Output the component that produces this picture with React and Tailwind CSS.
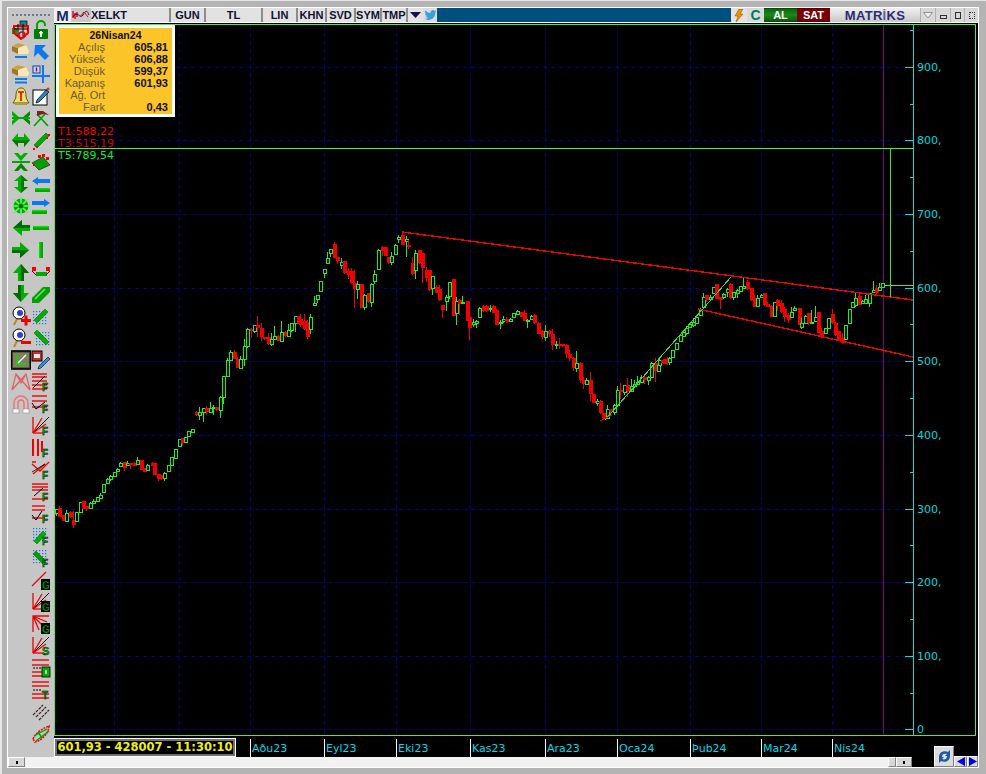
import React from "react";

const G = "#00a800", R = "#f00000", B = "#0a78f0", K = "#000";

const Arrow = ({ r = 0, c = "#00b000", d = "#006c00" }) => (
  <g transform={`rotate(${r} 10 10)`}>
    <path d="M10 2 L2 11 H7 V19 H13 V11 H18 Z" fill={c} />
    <path d="M10 2 L18 11 H13 V19 H10 Z" fill={d} />
  </g>
);
const BlueDots = ({ x = 2, y = 2 }) => (
  <g fill={B}>
    {[0, 3, 6, 9, 12].flatMap((a) =>
      [0, 3, 6, 9, 12].map((b) => <rect key={a + "-" + b} x={x + a} y={y + b} width="1.2" height="1.2" />)
    )}
  </g>
);
const Letter = ({ ch, x = 11, y = 19, s = 10, box }) => (
  <g>
    {box && <rect x={x - 1} y={y - 10} width="9" height="11" fill={K} />}
    <text x={x} y={y} fontSize={s} fontWeight="700" fill={box ? "#00c000" : "#00a800"} stroke={K} strokeWidth=".4" fontFamily="'Liberation Sans', sans-serif">
      {ch}
    </text>
  </g>
);
const RLines = ({ ys, x2 = 19 }) => (
  <g stroke={R} strokeWidth="1.4">
    {ys.map((y) => <line key={y} x1="1" x2={x2} y1={y} y2={y} />)}
  </g>
);
const Fan = () => (
  <g stroke={R} strokeWidth="1.3">
    <line x1="2" y1="1" x2="2" y2="17" />
    <line x1="2" y1="17" x2="12" y2="17" />
    <line x1="2" y1="17" x2="18" y2="1" stroke={K} strokeWidth="1" />
    <line x1="2" y1="17" x2="11" y2="2" />
    <line x1="2" y1="17" x2="15" y2="8" />
  </g>
);
const Loupe = ({ plus }) => (
  <g>
    <line x1="7" y1="11" x2="3" y2="19" stroke="#b88a20" strokeWidth="2" />
    <circle cx="8" cy="7" r="6" fill="#fff" stroke={K} strokeWidth="1" />
    <circle cx="9" cy="7" r="3" fill="#3040c0" />
    <rect x="10" y="13" width="10" height="3" fill={R} />
    {plus && <rect x="13.5" y="9.5" width="3" height="10" fill={R} />}
  </g>
);
const Block = ({ two }) => (
  <g>
    <path d="M1 4 L7 1 L15 3 L18 9 L17 12 L7 12 L2 9 Z" fill="#f8e8b8" />
    <path d="M1 4 L7 6 V12 L1 9 Z" fill="#a07820" />
    <path d="M1 4 L7 1 L15 3 L7 6 Z" fill="#c8a050" />
    <rect x="4" y="14" width="12" height="2" fill={B} />
    {two && <rect x="4" y="17.5" width="12" height="2" fill={B} />}
  </g>
);

const leftIcons = [
  <g key="a">
    <rect x="9" y="1" width="7" height="6" fill="#0a8aa0" stroke={K} strokeWidth=".7" />
    <rect x="1" y="8" width="5" height="6" fill="#00a000" />
    <path d="M3 6 H17 V13 L10 19 L3 13 Z" fill="none" stroke={R} strokeWidth="2" />
    <path d="M7 4 V16 M12 4 V16 M3 9 H17" stroke={K} strokeWidth="1" />
    <circle cx="11" cy="15" r="3" fill="none" stroke={R} strokeWidth="1.5" />
  </g>,
  <Block key="b" />,
  <Block key="c" two />,
  <g key="d">
    <path d="M10 2 C14 2 15 6 15 10 C15 13 17 15 18 17 H2 C3 15 5 13 5 10 C5 6 6 2 10 2 Z" fill="#e8e070" stroke="#605818" strokeWidth="1" />
    <path d="M7 6 H13 M10 6 V15" stroke={R} strokeWidth="1.6" />
    <rect x="4" y="17" width="12" height="2" fill="#a8a040" />
  </g>,
  <g key="e">
    <path d="M1 3 L9 10 L1 17 V13 L4 10 L1 7 Z" fill="#00b000" />
    <path d="M19 3 L11 10 L19 17 V13 L16 10 L19 7 Z" fill="#008800" />
    <rect x="1" y="9" width="18" height="2" fill={G} />
  </g>,
  <g key="f">
    <path d="M1 10 L7 3 V7 H13 V3 L19 10 L13 17 V13 H7 V17 Z" fill="#00b000" />
    <path d="M1 10 L7 17 V13 H13 V17 L19 10 Z" fill="#007c00" />
  </g>,
  <g key="g">
    <path d="M3 1 L10 9 L17 1 H13 L10 4 L7 1 Z" fill="#00b000" />
    <path d="M3 19 L10 11 L17 19 H13 L10 16 L7 19 Z" fill="#008800" />
    <rect x="1" y="9" width="18" height="2" fill={G} />
  </g>,
  <g key="h">
    <path d="M10 1 L17 7 H13 V13 H17 L10 19 L3 13 H7 V7 H3 Z" fill="#00b000" />
    <path d="M10 1 L17 7 H13 V13 H17 L10 19 Z" fill="#007c00" />
  </g>,
  <g key="i">
    <circle cx="10" cy="10" r="7.5" fill="#00b000" />
    <path d="M3 3 L17 17 M17 3 L3 17 M10 1 V19 M1 10 H19" stroke="#70f070" strokeWidth="1.6" />
    <circle cx="10" cy="10" r="2.5" fill="#007c00" />
  </g>,
  <Arrow key="j" r={-90} />,
  <Arrow key="k" r={90} />,
  <Arrow key="l" r={0} />,
  <Arrow key="m" r={180} />,
  <Loupe key="n" plus />,
  <Loupe key="o" />,
  <g key="p">
    <rect x="0.5" y="1" width="19" height="18" fill="#606030" stroke={K} strokeWidth="1.6" />
    <rect x="2" y="3" width="16" height="14" fill="#808060" />
    <path d="M6 5 V14 H15" stroke="#00e000" strokeWidth="1.6" fill="none" />
    <path d="M7 13 L15 5" stroke="#fff" strokeWidth="1.2" />
  </g>,
  <path key="q" d="M1 18 L5 2 L10 11 L15 2 L19 18 M5 2 L19 18 M15 2 L1 18" fill="none" stroke="#e06060" strokeWidth="1.2" />,
  <g key="r">
    <path d="M3 17 V9 A7 7 0 0 1 17 9 V17 M7 17 V9 A3 3 0 0 1 13 9 V17" fill="none" stroke="#f07070" strokeWidth="1.4" />
    <rect x="2" y="15" width="6" height="4" fill="#fff" stroke="#909090" strokeWidth=".6" />
    <rect x="12" y="15" width="6" height="4" fill="#fff" stroke="#909090" strokeWidth=".6" />
  </g>,
];

const rightIcons = [
  <g key="a">
    <path d="M6 9 V5 A4 4 0 0 1 14 5 V6" fill="none" stroke="#00a000" strokeWidth="2" />
    <rect x="3" y="9" width="14" height="10" rx="1" fill="#007c00" />
    <rect x="9" y="11" width="2" height="6" fill="#fff" />
    <rect x="8" y="12" width="4" height="1.5" fill="#fff" />
  </g>,
  <path key="b" d="M4 3 H15 L11 7 L18 14 L14 18 L7 11 L3 15 Z" fill={B} />,
  <g key="c">
    <rect x="2" y="2" width="7" height="7" fill="#c8d8f8" stroke="#0040b0" strokeWidth="1" />
    <path d="M5.5 3.5 V7.5" stroke="#c00000" strokeWidth="1.4" />
    <rect x="11" y="1" width="2" height="18" fill={B} />
    <rect x="1" y="11" width="18" height="2" fill={B} />
  </g>,
  <g key="d">
    <rect x="2" y="4" width="14" height="15" fill="#fff" stroke={K} strokeWidth="1" />
    <path d="M6 14 L15 4 L18 6 L8 16 L5 17 Z" fill="#3080c0" stroke={K} strokeWidth=".7" />
    <circle cx="17" cy="3" r="1.5" fill="#c04010" />
  </g>,
  <g key="e">
    <path d="M3 18 L14 6 M6 6 L17 18" stroke="#00a800" strokeWidth="1.8" />
    <path d="M6 3 H12 L18 7 L12 6 L6 8 Z" fill="#802020" />
  </g>,
  <g key="f">
    <path d="M3 15 L15 3 L18 6 L6 18 Z" fill={G} stroke="#007000" strokeWidth=".6" />
    <g fill={R}><path d="M2 18h2v2h-2zM5 16h2v2h-2zM15 7h2v2h-2zM17 4h2v2h-2z" /></g>
    <path d="M5 12 L12 5" stroke="#70f070" strokeWidth="1" />
  </g>,
  <g key="g">
    <path d="M1 11 L8 18 L19 13 L12 5 Z" fill="#00a000" stroke={K} strokeWidth=".5" />
    <g fill={R}><path d="M7 3h3v3h-3zM11 2h3v3h-3zM15 5h3v3h-3zM2 12h2v2h-2z" /></g>
  </g>,
  <g key="h">
    <path d="M1 7 L7 3 V5 H19 V9 H7 V11 Z" fill={B} />
    <rect x="4" y="14" width="15" height="4" fill="#00a800" />
    <rect x="4" y="14" width="15" height="1.5" fill="#00e000" />
  </g>,
  <g key="i">
    <path d="M19 7 L13 3 V5 H1 V9 H13 V11 Z" fill={B} />
    <rect x="1" y="14" width="15" height="4" fill="#00a800" />
    <rect x="1" y="14" width="15" height="1.5" fill="#00e000" />
  </g>,
  <g key="j"><rect x="2" y="8" width="16" height="4" fill="#00a800" /><rect x="2" y="8" width="16" height="1.5" fill="#00e000" /></g>,
  <g key="k"><rect x="8" y="2" width="4" height="16" fill="#00a800" /><rect x="8" y="2" width="1.5" height="16" fill="#00e000" /></g>,
  <g key="l">
    <rect x="5" y="10" width="11" height="4" fill="#00a800" />
    <path d="M1 5 h4 v4 h-4z M15 5 h4 v4 h-4z" fill={R} />
    <path d="M1 9 L5 13 M19 9 L15 13" stroke="#800000" strokeWidth="1" />
  </g>,
  <g key="m">
    <path d="M1 14 L12 3 H19 V8 L8 19 H1 Z" fill="#00a000" />
    <path d="M4 15 L14 5" stroke="#60f060" strokeWidth="1.4" />
  </g>,
  <g key="n"><BlueDots x={2} y={5} /><path d="M3 14 L14 3 L17 6 L6 17 Z" fill="#00b000" stroke="#006000" strokeWidth=".5" /></g>,
  <g key="o"><BlueDots x={5} y={4} /><path d="M3 5 L6 2 L18 14 L15 17 Z" fill="#00b000" stroke="#006000" strokeWidth=".5" /></g>,
  <g key="p">
    <rect x="1" y="1" width="10" height="10" fill="#c03030" stroke={K} strokeWidth="1" />
    <rect x="3" y="4" width="6" height="4" fill="#e8e8e8" />
    <path d="M8 16 L17 7 L19 9 L10 18 L7 19 Z" fill="#3090e0" stroke={K} strokeWidth=".6" />
  </g>,
];

const rightF = [
  <g key="a"><RLines ys={[2, 5, 9, 13, 17]} x2={16} /><path d="M2 16 L14 4" stroke={K} strokeWidth="1" /><Letter ch="F" /></g>,
  <g key="b"><RLines ys={[2, 7, 13]} x2={16} /><path d="M1 9 L5 15 L14 8" stroke={K} strokeWidth="1" fill="none" /><Letter ch="F" /></g>,
  <g key="c"><Fan /><Letter ch="F" /></g>,
  <g key="d"><path d="M2 1 V18 M7 1 V18 M11 3 V14" stroke={R} strokeWidth="2" /><Letter ch="F" /></g>,
  <g key="e"><path d="M1 4 L9 11 L18 2 M2 14 L14 4 M1 2 H5" stroke={R} strokeWidth="1.3" fill="none" /><path d="M1 12 L14 4" stroke={K} strokeWidth=".8" /><Letter ch="F" /></g>,
  <g key="f"><RLines ys={[2, 5, 8, 17]} x2={17} /><path d="M3 14 L12 6" stroke={K} strokeWidth="1" /><Letter ch="F" /></g>,
  <g key="g"><RLines ys={[2, 6, 14]} x2={14} /><path d="M1 11 L5 16 L11 7" stroke={K} strokeWidth="1" fill="none" /><Letter ch="F" /></g>,
  <g key="h"><BlueDots x={2} y={2} /><path d="M3 15 L12 5 L15 8 L6 18 Z" fill="#00b000" stroke="#006000" strokeWidth=".5" /><Letter ch="F" /></g>,
  <g key="i"><BlueDots x={2} y={2} /><path d="M2 6 L5 3 L15 13 L12 16 Z" fill="#00a000" stroke="#006000" strokeWidth=".5" /><Letter ch="F" /></g>,
  <g key="j"><path d="M1 16 L15 2" stroke={R} strokeWidth="1.2" /><Letter ch="G" box /></g>,
  <g key="k"><Fan /><Letter ch="G" box /></g>,
  <g key="l"><path d="M2 18 V2 H18 M2 2 L14 14 M2 2 L8 16 M2 2 L16 8" stroke={R} strokeWidth="1.3" fill="none" /><Letter ch="G" box /></g>,
  <g key="m"><Fan /><Letter ch="S" s={11} /></g>,
  <g key="n"><RLines ys={[2, 7, 14, 18]} x2={18} /><path d="M2 10 H10" stroke={K} strokeDasharray="2 1" /><rect x="11" y="9" width="8" height="10" fill="#00b000" stroke={K} strokeWidth=".8" /><rect x="14" y="12" width="2" height="4" fill="#c0c0c0" /></g>,
  <g key="o"><RLines ys={[2, 6, 14, 18]} x2={18} /><path d="M2 10 H10" stroke={K} strokeDasharray="2 1" /><Letter ch="T" /></g>,
  <g key="p"><path d="M2 13 L12 3 M5 15 L15 5 M8 18 L18 8" stroke="#402020" strokeWidth="1.2" strokeDasharray="3 1" /></g>,
  <g key="q">
    <path d="M2 15 C5 8 13 4 18 2 C18 8 12 16 4 18 Z" fill="none" stroke={R} strokeWidth="1.6" strokeDasharray="2 1" />
    <path d="M3 12 L16 5 M5 17 L18 7 M7 8 L11 14" stroke="#00a000" strokeWidth="1.4" />
  </g>,
];

const Ico = ({ children }) => (
  <svg width="20" height="20" viewBox="0 0 20 20" className="block">{children}</svg>
);

function Toolbar() {
  const cells = [];
  for (let i = 0; i < 18; i++) {
    cells.push(<div key={"l" + i} className="flex h-[22px] w-[20px] items-center justify-center"><Ico>{leftIcons[i]}</Ico></div>);
    cells.push(<div key={"r" + i} className="flex h-[22px] w-[20px] items-center justify-center"><Ico>{rightIcons[i] || rightF[i - rightIcons.length]}</Ico></div>);
  }
  const rest = rightF.slice(2);
  return (
    <div className="flex w-[46px] shrink-0 flex-col bg-[#c6c6c6]">
      <div className="mx-[4px] mt-[6px] h-[2px] border-t-2 border-dotted border-[#6a7a90]" />
      <div className="mt-[3px] grid grid-cols-[20px_20px] justify-center">
        {cells}
        {rest.map((ic, i) => (
          <React.Fragment key={i}>
            <div className="h-[22px]" />
            <div className="flex h-[22px] w-[20px] items-center justify-center"><Ico>{ic}</Ico></div>
          </React.Fragment>
        ))}
      </div>
    </div>
  );
}

const TB = ({ w, children }) => (
  <div className="flex h-[14px] shrink-0 items-center justify-center border-r-2 border-[#8c8c8c] bg-[#e2e2e2] text-[11px] font-bold text-[#101030]" style={{ width: w }}>
    {children}
  </div>
);
const WinBtn = ({ w, children }) => (
  <div className="flex h-[14px] shrink-0 items-center justify-center border-l border-[#b0b0b0] bg-[#d8d8d8]" style={{ width: w }}>{children}</div>
);

function TopBar() {
  return (
    <div className="flex h-[14px] bg-[#00507f] font-['Liberation_Sans',sans-serif] leading-none">
      <div className="flex h-[14px] w-[17px] shrink-0 items-center justify-center bg-[#f0f0f0] text-[15px] font-bold text-[#1a2a6a]">M</div>
      <div className="flex h-[14px] w-[20px] shrink-0 items-center justify-center bg-[#c8c8c8]">
        <svg width="18" height="12" viewBox="0 0 18 12"><path d="M1 2 V9 M3 4 V10 M5 3 V8" stroke={R} strokeWidth="1.4" /><path d="M1 8 C5 0 8 11 11 6 S15 1 17 6" stroke="#101060" fill="none" /><path d="M8 8 L12 3 L16 8" stroke={R} fill="none" /></svg>
      </div>
      <div className="flex h-[14px] w-[80px] shrink-0 items-center border-r-2 border-[#8c8c8c] bg-[#e2e2e2] text-[11px] font-bold text-[#101030]">XELKT</div>
      <TB w={35}>GUN</TB>
      <TB w={57}>TL</TB>
      <TB w={35}>LIN</TB>
      <TB w={29}>KHN</TB>
      <TB w={29}>SVD</TB>
      <TB w={26}>SYM</TB>
      <TB w={26}>TMP</TB>
      <div className="flex h-[14px] w-[15px] shrink-0 items-center justify-center bg-[#e2e2e2]">
        <svg width="11" height="7" viewBox="0 0 11 7"><path d="M0 0 H11 L5.5 6 Z" fill="#101050" /></svg>
      </div>
      <div className="flex h-[14px] w-[14px] shrink-0 items-center justify-center bg-[#dcdcdc]">
        <svg width="13" height="12" viewBox="0 0 24 24"><path fill="#3aa0dc" d="M23.95 4.57a10 10 0 0 1-2.83.78 4.96 4.96 0 0 0 2.17-2.72 10 10 0 0 1-3.13 1.19 4.92 4.92 0 0 0-8.38 4.48A13.98 13.98 0 0 1 1.67 3.15a4.92 4.92 0 0 0 1.52 6.57 4.9 4.9 0 0 1-2.23-.61v.06a4.92 4.92 0 0 0 3.95 4.83 5 5 0 0 1-2.21.08 4.94 4.94 0 0 0 4.6 3.42A9.87 9.87 0 0 1 0 19.54a13.94 13.94 0 0 0 7.55 2.21c9.05 0 14-7.5 14-13.98l-.01-.64a10 10 0 0 0 2.41-2.56z" /></svg>
      </div>
      <div className="min-w-0 flex-1" />
      <div className="flex h-[14px] w-[16px] shrink-0 items-center justify-center bg-[#e2e2e2]">
        <svg width="10" height="13" viewBox="0 0 10 13"><path d="M5 0 H9 L6 5 H9 L2 13 L4 7 H1 Z" fill="#f09000" stroke="#805000" strokeWidth=".5" /></svg>
      </div>
      <div className="flex h-[14px] w-[17px] shrink-0 items-center justify-center bg-[#d8dcd8] text-[14px] font-black text-[#007860]">C</div>
      <div className="flex h-[14px] w-[33px] shrink-0 items-center justify-center border-y border-[#0a4a0a] bg-gradient-to-b from-[#0a6a0a] via-[#1a8a1a] to-[#0a5a0a] text-[11px] font-bold text-white">AL</div>
      <div className="flex h-[14px] w-[33px] shrink-0 items-center justify-center border-y border-[#5a0000] bg-[#7a0008] text-[11px] font-bold text-white">SAT</div>
      <div className="flex h-[14px] w-[90px] shrink-0 items-center justify-center bg-gradient-to-b from-[#f0f0f0] to-[#c8c8c8] text-[13px] font-bold tracking-[0.3px] text-[#2a2a78]">MATR<span className="text-[#606080]">İ</span>KS</div>
      <WinBtn w={15}><svg width="10" height="7" viewBox="0 0 10 7"><path d="M0.5 0.5 H9.5 L5 6 Z" fill="#f0f0f0" stroke="#909090" /></svg></WinBtn>
      <WinBtn w={15}><div className="mt-[3px] h-[4px] w-[7px] border border-[#303030]" /></WinBtn>
      <WinBtn w={14}><div className="h-[7px] w-[6px] border border-[#303030]" /></WinBtn>
      <WinBtn w={14}><div className="h-[7px] w-[6px] border border-dotted border-[#303030]" /></WinBtn>
    </div>
  );
}

/* ----- chart ----- */
const path = [
  [190, 420], [195, 412], [205, 414], [220, 402], [230, 352], [240, 365], [250, 328], [262, 333], [275, 342],
  [290, 325], [300, 322], [540, 330], [550, 340], [565, 350], [580, 375], [590, 390], [605, 417], [618, 392], [640, 378], [660, 362],
];
const at = (x) => {
  for (let i = 1; i < path.length; i++) {
    if (x <= path[i][0]) {
      const [a, b] = path[i - 1], [c, d] = path[i];
      return b + ((d - b) * (x - a)) / (c - a);
    }
  }
  return 362;
};
function generated(from, to) {
  let s = 987 + from;
  const rnd = () => ((s = (s * 1664525 + 1013904223) >>> 0) / 4294967296);
  const out = [];
  let prev = at(from);
  for (let x = from; x < to; x += 3.41) {
    const close = at(x + 1.7) + (rnd() - 0.5) * 14;
    const open = prev;
    const top = Math.min(open, close), bot = Math.max(open, close);
    out.push({ x: Math.round(x), top: Math.round(top), bot: Math.round(bot), hi: Math.round(top - rnd() * rnd() * 12), lo: Math.round(bot + rnd() * rnd() * 12), up: close < open });
    prev = close;
  }
  return out;
}
const expand = (ox, oy, list) =>
  list.map(([X, c, t, b, h, l]) => ({
    x: Math.round(ox + X / 3 - 2),
    up: c === "g",
    top: Math.round(oy + t / 3),
    bot: Math.round(oy + b / 3),
    hi: Math.round(oy + (h ?? t) / 3),
    lo: Math.round(oy + (l ?? b) / 3),
  }));

const z10 = [[14,"r",240,256],[22,"g",238,248,238,258],[31,"r",234,260,228,262],[43,"r",256,272,255,274],[52,"g",250,272,240,274],[63,"r",246,262,244,264],[73,"r",270,284,244,294],[82,"g",247,272],[93,"g",217,247],[103,"r",214,238],[112,"r",228,238,228,242],[124,"g",219,233,217,234],[133,"g",212,219,206,222],[143,"g",201,212],[154,"g",195,204,190,206],[163,"g",163,185],[175,"g",147,158,144,162],[184,"g",138,147,136,152],[195,"g",126,137],[205,"g",116,124,114,126],[214,"g",99,108,96,110],[226,"r",96,114,96,122],[235,"g",100,104,93,106],[244,"r",98,105,98,116],[255,"r",98,107,96,108],[265,"g",90,101,82,104],[276,"r",90,120],[286,"r",114,125],[295,"g",105,119,102,120],[309,"r",99,108,97,108],[316,"r",99,135],[326,"r",132,147,132,152],[336,"r",135,147,135,150],[346,"g",128,144,126,152],[358,"g",106,122],[367,"g",82,104],[378,"g",58,84],[389,"g",28,47],[398,"r",24,38,24,48],[408,"g",22,36,22,40],[418,"g",4,17],[429,"g",-2,6]];
const z9 = [[3,"r",298,316,282,320],[14,"r",302,326,283,330],[24,"r",306,352,300,358],[34,"g",290,326,283,342],[44,"g",250,254,228,255],[55,"g",226,236,224,248],[64,"g",184,212],[74,"g",148,160,148,174],[85,"g",115,128,95,128],[94,"g",88,98,88,112],[106,"r",72,113,66,115],[115,"r",112,122,112,132],[125,"g",125,136,115,148],[136,"r",124,158,124,162],[146,"r",152,165,145,178],[156,"r",154,190,145,192],[166,"r",188,208,150,264],[175,"g",193,206,184,238],[187,"r",193,263,193,264],[196,"g",225,260,222,270],[207,"r",220,246,220,248],[217,"g",193,246,188,262],[226,"g",162,184,150,192],[238,"g",91,146,88,148],[248,"r",82,92,78,108],[258,"r",82,108],[268,"r",110,130,110,132],[277,"g",108,126,96,134],[288,"g",75,101,72,102],[298,"g",50,56,44,70],[308,"r",45,75,32,76],[320,"g",56,62,48,110],[328,"r",75,81,60,88],[339,"r",128,162,110,164],[349,"g",100,150,90,178],[359,"r",90,130,90,132],[370,"r",100,144,100,188],[380,"r",150,175,140,185],[390,"r",150,210,150,212],[400,"g",168,204,168,226],[410,"r",200,220,195,220],[420,"r",208,240,195,242],[430,"r",255,270,255,294],[440,"g",231,243,226,274],[451,"g",186,228,186,238],[461,"r",177,288],[471,"g",243,278,230,314],[481,"r",240,252,236,285],[490,"g",246,250,228,252],[503,"r",243,303,243,304],[511,"r",290,324,290,360],[521,"g",307,313,298,322],[532,"g",303,308,300,324],[541,"g",264,290,262,292],[553,"r",258,272,255,276],[562,"r",258,272,255,276],[572,"g",264,268,255,276],[583,"r",258,278,256,280],[592,"r",270,315,268,316],[603,"g",305,308,300,326],[613,"g",297,302,288,308],[622,"r",297,305,290,310],[634,"g",298,302,294,304],[643,"g",280,290,278,292],[654,"g",274,282,270,284],[665,"r",277,292,275,292],[674,"r",280,302,270,304],[685,"g",299,302,296,323],[695,"g",288,296,285,300],[705,"r",285,310,283,312],[716,"r",308,342,305,342]];
const z8 = [[0,"g",420,434,416,438],[8,"r",420,430],[15,"r",418,432],[23,"r",418,430,412,434],[31,"g",414,426,410,436],[40,"g",390,410],[52,"g",370,386],[62,"g",345,362],[71,"g",335,347,335,350],[81,"g",325,340,318,345],[91,"g",312,322],[102,"g",305,315,295,320],[112,"g",290,310],[122,"g",270,285,265,285],[133,"g",232,260,218,262],[142,"r",225,240,225,245],[152,"g",232,238,226,240],[163,"g",202,218],[172,"r",192,236],[184,"r",232,240,232,266],[193,"g",222,232,218,236],[203,"g",207,217,205,232],[214,"r",192,234,188,236],[223,"g",217,232,216,240],[235,"g",210,218,208,234],[244,"g",198,212],[253,"g",198,203,172,205],[265,"r",186,208,180,210],[275,"r",205,240,203,242],[285,"r",234,260,225,262],[295,"g",235,258,225,262],[305,"g",225,231,222,233],[316,"r",220,255,218,257],[325,"r",252,260,245,262],[336,"r",258,290,256,292],[346,"g",247,288],[355,"r",240,258,238,274],[366,"r",248,276,240,278],[376,"r",268,290,262,305],[387,"r",285,300,280,310],[397,"g",276,292,260,295],[406,"g",265,270,258,272],[419,"r",265,316],[427,"g",310,320,295,326],[437,"g",288,308,285,310],[447,"r",280,310,278,315],[457,"g",305,310,270,312],[468,"g",292,302,258,305],[478,"r",276,340],[487,"r",332,347,325,355],[498,"g",325,340],[508,"g",294,325],[518,"r",282,310,268,312],[528,"r",308,346,305,348],[538,"r",334,362],[550,"r",354,368,340,372],[559,"g",316,358],[570,"g",268,308],[580,"g",246,260],[589,"g",235,256,218,262],[599,"r",228,254,222,256],[610,"g",243,250,240,252],[619,"g",238,248,225,250],[631,"g",220,250,218,262],[641,"g",210,215,183,216],[651,"r",205,220,195,222],[661,"g",202,211,188,212],[670,"g",190,202,188,203]];

const candles = [
  ...expand(50, 430, z10),
  ...generated(195, 300),
  ...expand(300, 220, z9),
  ...generated(541, 660),
  ...expand(660, 220, z8),
];

const vGrid = [114, 179, 250, 324, 396, 470, 545, 617, 690, 761, 832];
const hGrid = [67, 140, 214, 288, 361, 435, 509, 582, 656, 729];
const axis = [["900,", 67], ["800,", 140], ["700,", 214], ["600,", 288], ["500,", 361], ["400,", 435], ["300,", 509], ["200,", 582], ["100,", 656], ["0", 729]];
const minor = [30, 104, 177, 251, 324, 398, 472, 545, 619, 693];

function Chart() {
  return (
    <svg width="924" height="714" viewBox="54 23 924 714" className="absolute inset-0 block" style={{ shapeRendering: "crispEdges" }}>
      <rect x="54" y="23" width="924" height="714" fill="#000" />
      <g stroke="#000090" strokeDasharray="4 4" strokeWidth="1">
        {vGrid.map((x) => <line key={x} x1={x + 0.5} x2={x + 0.5} y1="25" y2="735" />)}
        {hGrid.map((y) => <line key={y} x1="55" x2="913" y1={y + 0.5} y2={y + 0.5} />)}
      </g>
      <line x1="883.5" x2="883.5" y1="25" y2="735" stroke="#800080" />
      {candles.map((c, i) => {
        const col = c.up ? "#18f018" : "#f00000";
        return (
          <g key={i}>
            <line x1={c.x + 1.5} x2={c.x + 1.5} y1={c.hi} y2={c.lo} stroke={col} />
            {c.up ? (
              <rect x={c.x + 0.5} y={c.top + 0.5} width="3" height={Math.max(c.bot - c.top, 1)} fill="#000" stroke={col} />
            ) : (
              <rect x={c.x} y={c.top} width="4" height={Math.max(c.bot - c.top, 2)} fill={col} />
            )}
          </g>
        );
      })}
      <line x1="402" y1="232" x2="913" y2="300" stroke="#f00000" strokeWidth="1.4" />
      <line x1="698" y1="309" x2="913" y2="357" stroke="#f00000" strokeWidth="1.4" />
      <line x1="605" y1="420" x2="731" y2="277" stroke="#30e030" />
      <line x1="600" y1="421" x2="612" y2="415" stroke="#f00000" />
      <line x1="55" x2="913" y1="148.5" y2="148.5" stroke="#40f040" />
      <line x1="890.5" x2="890.5" y1="148" y2="297" stroke="#40e020" />
      <line x1="885" x2="913" y1="285.5" y2="285.5" stroke="#40f040" />
      <line x1="913.5" x2="913.5" y1="25" y2="735" stroke="#00e0e0" />
      {axis.map(([t, y]) => <line key={t} x1="905" x2="913" y1={y + 0.5} y2={y + 0.5} stroke="#00e0e0" />)}
      {minor.map((y) => <line key={y} x1="910" x2="913" y1={y + 0.5} y2={y + 0.5} stroke="#00e0e0" />)}
      <g fontFamily="'DejaVu Sans', sans-serif" fontSize="11">
        {axis.map(([t, y]) => <text key={t} x="917" y={y + 4} fill="#00d8d8">{t}</text>)}
        <text x="58" y="135" fill="#f00000">T1:588,22</text>
        <text x="58" y="147" fill="#d00000">T3:515,19</text>
        <text x="58" y="159" fill="#00f040">T5:789,54</text>
      </g>
      <rect x="54.5" y="24.5" width="921" height="711" fill="none" stroke="#50e850" />
    </svg>
  );
}

const info = [["Açılış", "605,81"], ["Yüksek", "606,88"], ["Düşük", "599,37"], ["Kapanış", "601,93"], ["Ağ. Ort", ""], ["Fark", "0,43"]];

function InfoBox() {
  return (
    <div className="w-[119px] border-[3px] border-white bg-[#fbc52a] pb-[1px] pt-[1px] font-['Liberation_Sans',sans-serif] text-[11px] leading-[12px]">
      <div className="text-center text-[10.5px] font-bold text-[#101010]">26Nisan24</div>
      {info.map(([a, b]) => (
        <div key={a} className="flex h-[12px]">
          <span className="w-[46px] text-right text-[#6a5a3a]">{a}</span>
          <span className="flex-1 pr-[4px] text-right font-bold text-[#101010]">{b}</span>
        </div>
      ))}
    </div>
  );
}

const months = [["Aðu23", 250], ["Eyl23", 324], ["Eki23", 396], ["Kas23", 470], ["Ara23", 545], ["Oca24", 617], ["Þub24", 690], ["Mar24", 761], ["Nis24", 832]];

function Footer() {
  return (
    <div className="flex h-[20px] bg-black pt-[2px] font-['DejaVu_Sans',sans-serif]">
      <div className="ml-[1px] flex h-[17px] w-[180px] shrink-0 items-center justify-center whitespace-nowrap border-2 border-[#707070] bg-black text-[11.5px] font-bold leading-none text-[#f0f000] outline outline-1 outline-white">
        601,93 - 428007 - 11:30:10
      </div>
      <div className="relative h-[18px] min-w-0 flex-1">
        {months.map(([m, x]) => (
          <div key={m} className="absolute bottom-0 top-0 flex items-end border-l border-white pb-[1px] pl-[1px] text-[11px] leading-[14px] text-[#00d8e8]" style={{ left: x - 235 }}>{m}</div>
        ))}
      </div>
    </div>
  );
}

const Tiny = ({ w, children }) => (
  <div className="flex h-[10px] shrink-0 items-center justify-center border border-[#808080] border-l-white border-t-white bg-[#d8d8d8]" style={{ width: w }}>{children}</div>
);

function ScrollRow() {
  return (
    <div className="relative flex h-[10px] bg-black">
      <Tiny w={17}><div className="h-[3px] w-[2px] bg-black" /></Tiny>
      <div className="h-[10px] w-[863px] bg-[#f2f2f2]" />
      <Tiny w={8} />
      <Tiny w={16}><div className="h-[3px] w-[2px] bg-black" /></Tiny>
      <div className="absolute right-0 top-[-11px] flex items-end">
        <div className="flex h-[21px] w-[20px] items-center justify-center border border-[#808080] border-l-white border-t-white bg-[#dcdcdc]">
          <svg width="15" height="15" viewBox="0 0 15 15"><path d="M2 8 C2 3 7 1 11 3 L13 1 V7 H8 L10 5 C7 4 5 5 5 8 Z M13 7 C13 12 8 14 4 12 L2 14 V8 H7 L5 10 C8 11 10 10 10 7 Z" fill="#1a58a8" /></svg>
        </div>
        <div className="flex h-[11px] w-[13px] items-center justify-center border border-[#808080] border-l-white border-t-white bg-[#dcdcdc]">
          <svg width="8" height="9" viewBox="0 0 8 9"><path d="M8 0 V9 L0 4.5 Z" fill="#0000e0" /></svg>
        </div>
        <div className="flex h-[11px] w-[11px] items-center justify-center border border-[#808080] border-l-white border-t-white bg-[#dcdcdc]">
          <svg width="8" height="9" viewBox="0 0 8 9"><path d="M0 0 V9 L8 4.5 Z" fill="#0000e0" /></svg>
        </div>
      </div>
    </div>
  );
}

export default function App() {
  return (
    <div className="flex h-[774px] w-[986px] flex-col overflow-hidden border-l-2 border-t border-[#e6e6e6] bg-[#b4b4b4] font-['DejaVu_Sans',sans-serif]">
      <div className="ml-[5px] mt-[6px] w-[972px] shrink-0 border border-white bg-[#c6c6c6]">
        <div className="flex h-[749px]">
          <Toolbar />
          <div className="flex w-[924px] shrink-0 flex-col">
            <TopBar />
            <div className="h-[1px] bg-white" />
            <div className="relative h-[714px]">
              <Chart />
              <div className="absolute left-[2px] top-[2px]"><InfoBox /></div>
            </div>
            <Footer />
          </div>
        </div>
        <ScrollRow />
      </div>
    </div>
  );
}
